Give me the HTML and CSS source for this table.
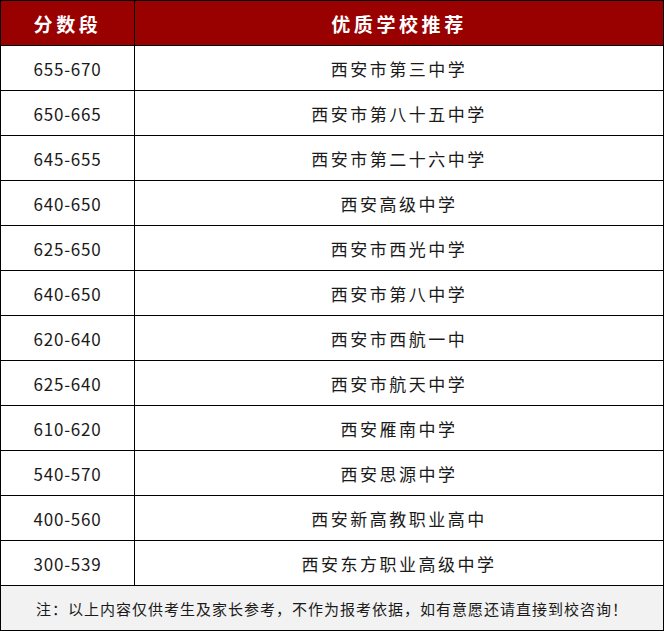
FILE: index.html
```html
<!DOCTYPE html>
<html lang="zh">
<head>
<meta charset="utf-8">
<link rel="stylesheet" href="styles.css">
</head>
<body>
<table class="schools">
  <thead>
    <tr><th class="col-score">分数段</th><th>优质学校推荐</th></tr>
  </thead>
  <tbody>
    <tr><td class="num">655-670</td><td>西安市第三中学</td></tr>
    <tr><td class="num">650-665</td><td>西安市第八十五中学</td></tr>
    <tr><td class="num">645-655</td><td>西安市第二十六中学</td></tr>
    <tr><td class="num">640-650</td><td>西安高级中学</td></tr>
    <tr><td class="num">625-650</td><td>西安市西光中学</td></tr>
    <tr><td class="num">640-650</td><td>西安市第八中学</td></tr>
    <tr><td class="num">620-640</td><td>西安市西航一中</td></tr>
    <tr><td class="num">625-640</td><td>西安市航天中学</td></tr>
    <tr><td class="num">610-620</td><td>西安雁南中学</td></tr>
    <tr><td class="num">540-570</td><td>西安思源中学</td></tr>
    <tr><td class="num">400-560</td><td>西安新高教职业高中</td></tr>
    <tr><td class="num">300-539</td><td>西安东方职业高级中学</td></tr>
  </tbody>
  <tfoot>
    <tr><td colspan="2" class="note">注：以上内容仅供考生及家长参考，不作为报考依据，如有意愿还请直接到校咨询！</td></tr>
  </tfoot>
</table>
</body>
</html>
```

FILE: styles.css
```css
html, body {
  margin: 0;
  padding: 0;
  background: #ffffff;
}
.schools {
  width: 664px;
  border-collapse: collapse;
  table-layout: fixed;
  font-family: "Noto Sans CJK SC", "Noto Sans", sans-serif;
  color: #1a1a1a;
}
.schools th,
.schools td {
  border: 1px solid #000;
  text-align: center;
  vertical-align: middle;
  padding: 0;
}
.schools th {
  background: #990000;
  color: #ffffff;
  font-weight: 700;
  font-size: 19px;
  letter-spacing: 3.6px;
  height: 44px;
}
.col-score {
  width: 133px;
}
.schools td {
  height: 44px;
  font-size: 17px;
  letter-spacing: 2.5px;
}
.schools td.num {
  letter-spacing: 0.8px;
}
.schools td.note {
  background: #f2f2f2;
  font-size: 15px;
  letter-spacing: 1px;
  height: 44px;
}
```
